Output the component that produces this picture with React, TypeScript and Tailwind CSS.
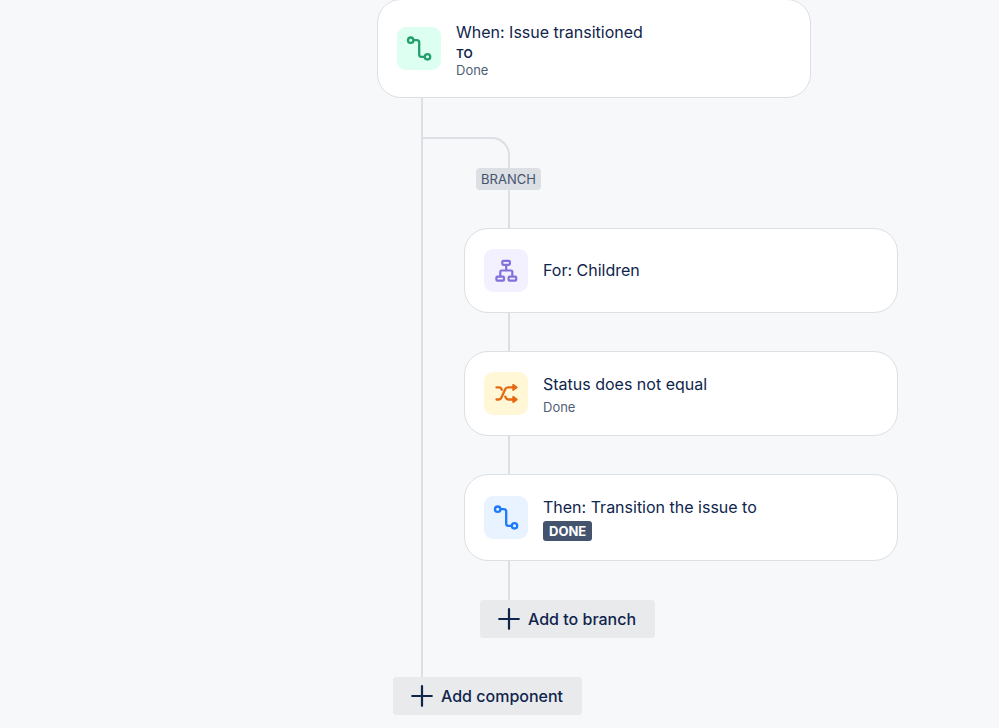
import type { ReactNode } from "react";

function TransitionIcon() {
  return (
    <svg viewBox="0 0 43 43" className="w-full h-full" fill="none" stroke="currentColor" strokeWidth={2.3}>
      <circle cx="13.2" cy="13.2" r="2.7" />
      <circle cx="30" cy="29.8" r="2.7" />
      <path d="M16 13.2h3.3a2.4 2.4 0 0 1 2.4 2.4v11.8a2.4 2.4 0 0 0 2.4 2.4h3.1" />
    </svg>
  );
}

function TreeIcon() {
  return (
    <svg viewBox="0 0 43 43" className="w-full h-full" fill="none" stroke="currentColor" strokeWidth={2.2}>
      <rect x="17.8" y="11.8" width="7.6" height="4" rx="1" />
      <rect x="11.9" y="27.7" width="7.6" height="4" rx="1" />
      <rect x="24.1" y="27.7" width="7.6" height="4" rx="1" />
      <path d="M21.7 16v5.5M15.8 27.5v-4.8a1.2 1.2 0 0 1 1.2-1.2h9.6a1.2 1.2 0 0 1 1.2 1.2v4.8" />
    </svg>
  );
}

function ShuffleIcon() {
  return (
    <svg
      viewBox="0 0 43 43"
      className="w-full h-full"
      fill="none"
      stroke="currentColor"
      strokeWidth={2.3}
      strokeLinecap="round"
      strokeLinejoin="round"
    >
      <path d="M12 27.5h2.4c1.4 0 2-.6 2.6-1.9l3.7-8.3c.6-1.3 1.3-1.9 2.7-1.9H29" />
      <path d="M12 15.4h2.6c1.2 0 1.9.6 2.4 1.7l.3.7M20.8 24.6l.5 1.1c.6 1.3 1.2 1.8 2.4 1.8H29" />
      <path d="M28.6 12.6v5.6l3.8-2.8zM28.6 24.7v5.6l3.8-2.8z" fill="currentColor" strokeWidth={1.6} />
    </svg>
  );
}

function PlusIcon() {
  return (
    <svg viewBox="0 0 22 22" className="w-[22px] h-[22px]" fill="none" stroke="currentColor" strokeWidth={2.2} strokeLinecap="round">
      <path d="M11 1.2v19.6M1.2 11h19.6" />
    </svg>
  );
}

type CardProps = { icon: ReactNode; tint: string; title: string; children?: ReactNode };

function Card({ icon, tint, title, children }: CardProps) {
  return (
    <div className="w-[434px] flex items-center gap-[15px] px-[19px] py-[19px] bg-white border border-[#dcdfe4] rounded-3xl">
      <div className={`w-11 h-[43px] my-px shrink-0 rounded-[9px] ${tint}`}>{icon}</div>
      <div>
        <h2 className="text-base leading-[27px]">{title}</h2>
        {children}
      </div>
    </div>
  );
}

function Connector({ height = "h-[38px]" }: { height?: string }) {
  return <div className={`ml-[85px] w-0.5 bg-[#dcdfe4] ${height}`} />;
}

function AddButton({ label }: { label: string }) {
  return (
    <button className="h-[38px] pl-[18px] pr-[19px] flex items-center gap-2 rounded-[3px] bg-[#e9eaec] text-base font-medium cursor-pointer">
      <PlusIcon />
      {label}
    </button>
  );
}

export default function App() {
  return (
    <main className="min-h-screen flex justify-end pr-[101px] overflow-hidden bg-[#f7f8fa] text-[#10254c] font-['Inter',sans-serif]">
      <div className="w-[521px] -mt-px pb-3">
        <Card icon={<TransitionIcon />} tint="bg-[#dcfff1] text-[#22a06b]" title="When: Issue transitioned">
          <p className="text-xs leading-4 font-semibold">TO</p>
          <p className="text-[13px] leading-4 text-[#505f79]">Done</p>
        </Card>

        {/* Main trunk with the branch hanging off it */}
        <div className="ml-11 pt-[39px] pb-[39px] border-l-2 border-[#dcdfe4]">
          <div className="w-[87px] h-[31px] border-t-2 border-r-2 border-[#dcdfe4] rounded-tr-[18px]" />
          <div className="ml-[53px] w-[65px] h-[22px] pt-0.5 flex items-center justify-center rounded bg-[#dcdfe4] text-[13px] text-[#44546f]">
            BRANCH
          </div>
          <Connector />
          <div className="ml-[41px]">
            <Card icon={<TreeIcon />} tint="bg-[#f3f0ff] text-[#8270db]" title="For: Children" />
          </div>
          <Connector />
          <div className="ml-[41px]">
            <Card icon={<ShuffleIcon />} tint="bg-[#fff7d6] text-[#e56910]" title="Status does not equal">
              <p className="text-[13px] leading-[18px] text-[#505f79]">Done</p>
            </Card>
          </div>
          <Connector />
          <div className="ml-[41px]">
            <Card icon={<TransitionIcon />} tint="bg-[#e9f2ff] text-[#1d7afc]" title="Then: Transition the issue to">
              <span className="w-fit h-5 px-1.5 pt-px flex items-center rounded-[3px] bg-[#44546f] text-[13px] font-bold text-white">
                DONE
              </span>
            </Card>
          </div>
          <Connector height="h-[39px]" />
          <div className="ml-[57px]">
            <AddButton label="Add to branch" />
          </div>
        </div>
        <div className="ml-4">
          <AddButton label="Add component" />
        </div>
      </div>
    </main>
  );
}
